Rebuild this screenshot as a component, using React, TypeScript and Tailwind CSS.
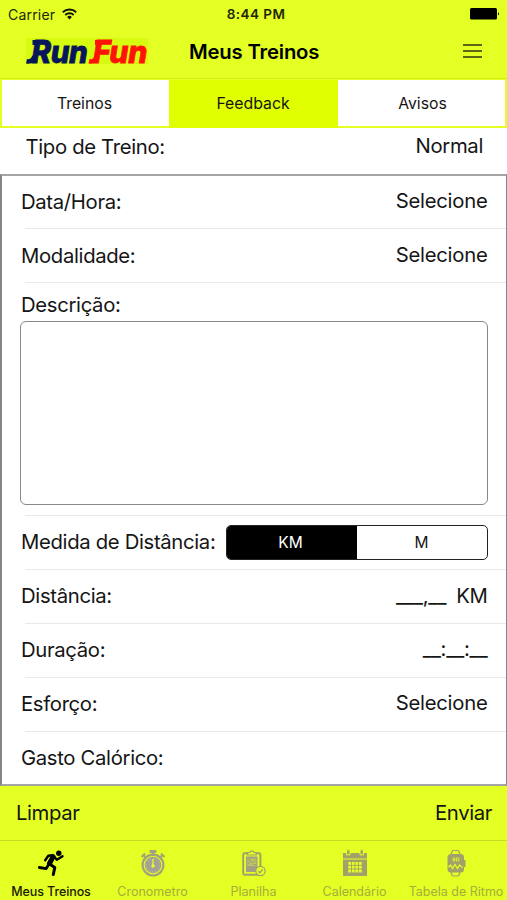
import type { ReactNode } from "react";

function Row({ label, value, className = "", valueClass = "" }: { label: string; value?: ReactNode; className?: string; valueClass?: string }) {
  return (
    <div className={"relative flex shrink-0 items-center justify-between pr-[18.500px] pl-[19px] " + className}>
      <span>{label}</span>
      <span className={valueClass}>{value}</span>
      <div className="absolute right-0 bottom-0 left-[23px] h-px bg-[#e9e9e9]" />
    </div>
  );
}

function Tab({ label, icon, active = false, className = "" }: { label: string; icon: ReactNode; active?: boolean; className?: string }) {
  return (
    <div className={"flex flex-col items-center pt-[8px] whitespace-nowrap " + (active ? "font-medium text-[#1c2003]" : "text-[#a5ad3c]")}>
      <div className="flex h-7 items-center justify-center">{icon}</div>
      <span className={"mt-[6px] text-[12.5px] leading-[18px] " + className}>{label}</span>
    </div>
  );
}

const RunIcon = () => (
  <svg width="28" height="28" viewBox="0 0 28 28" fill="none" stroke="#000" strokeLinecap="round" strokeLinejoin="round">
    <circle cx="21.8" cy="4.200" r="2.700" fill="#000" stroke="none" />
    <path d="M8.200 11.200 11.300 6.800 16 6.300 19.800 10.800 25.500 7.200" strokeWidth="2.400" />
    <path d="M16 7.800 12.500 14.500" strokeWidth="5" />
    <path d="M12 15 9.200 19.600 2.300 18.500" strokeWidth="2.800" />
    <path d="M12.500 15 17.800 18.500 16.300 25.500" strokeWidth="3" />
  </svg>
);

const StopwatchIcon = () => (
  <svg width="28" height="28" viewBox="0 0 28 28" fill="none" stroke="#a3a278">
    <path d="M11 1.500h6v2h-6z" fill="#a3a278" strokeWidth="1" />
    <path d="M14 3v4M6.200 8 4.500 6M21.800 8 23.500 6" strokeWidth="2.200" />
    <path d="M2.500 8 6 4.500M25.500 8 22 4.500" strokeWidth="2" />
    <circle cx="14" cy="16" r="10.400" strokeWidth="2.200" />
    <circle cx="14" cy="16" r="8.300" fill="#a3a198" stroke="none" />
    <circle cx="14" cy="16" r="6.700" stroke="#c9d455" strokeWidth="1" strokeDasharray="1.200 2.300" />
    <path d="M14 10v6" stroke="#e3ff23" strokeWidth="1.300" />
    <circle cx="14" cy="17" r="1.700" fill="#e3ff23" stroke="none" />
  </svg>
);

const ClipboardIcon = () => (
  <svg width="28" height="28" viewBox="0 0 28 28" fill="none" stroke="#a19f6c">
    <rect x="3.200" y="4.200" width="17.200" height="21.500" rx="1.500" strokeWidth="1.900" />
    <path d="M7.500 6V3.500h2.200a2.200 2.200 0 0 1 4.200 0h2.200V6z" fill="#e3ff23" strokeWidth="1.200" />
    <rect x="6" y="7.500" width="11.500" height="15.500" fill="#a19f84" stroke="none" />
    <rect x="7.300" y="9.500" width="9" height="7.500" fill="#bcc262" stroke="none" />
    <path d="M8 15l2.500-3 2 2 3-3M8 11h3M13 15.500h3" strokeWidth="1" />
    <circle cx="20.500" cy="22" r="4.700" fill="#e3ff23" strokeWidth="1.200" />
    <path d="m18.300 22.200 1.500 1.500 3-3.600" strokeWidth="1.300" />
  </svg>
);

const CalendarIcon = () => (
  <svg width="28" height="28" viewBox="0 0 28 28" fill="#a3a16a">
    <path d="M2 4h24v5.500H2zM2 10.500h24V27H2z" />
    <path d="M5.500 .8h3.500v5H5.500zM19 .8h3.500v5H19z" stroke="#e3ff23" strokeWidth="1" />
    <path d="M7.300 13h13.400v10.500H7.300z" fill="#e3ff23" />
    <path d="M7 16.400h14M7 20h14M10.500 13v11M14 13v11M17.500 13v11" stroke="#a3a16a" strokeWidth=".9" />
  </svg>
);

const WatchIcon = () => (
  <svg width="28" height="28" viewBox="0 0 28 28" fill="none" stroke="#a3a16a">
    <path d="M8.500 7 10 2.500Q10.300 1.500 11.300 1.500h4.400q1 0 1.300 1L18.500 7M8.500 22l1.500 4q.3 1 1.300 1h4.400q1 0 1.300-1l1.500-4" strokeWidth="1.200" />
    <rect x="5.500" y="5" width="16.500" height="18.500" rx="3.500" fill="#a3a16a" stroke="none" />
    <path d="M22.500 11v7" strokeWidth="2" />
    <path d="M10.500 9h2.300v3h-2.300M10.500 10.500h2.300M14.500 9h2.300v3h-2.300z" stroke="#e3ff23" strokeWidth=".8" />
    <path d="m6.500 18 2-2 2 3.500 2.500-4 2.500 4 2-3.500 2 2h1.500" stroke="#e3ff23" strokeWidth="1.200" />
  </svg>
);

export default function App() {
  return (
    <div className="flex h-[900px] w-[507px] flex-col overflow-hidden bg-white font-[Inter,'Liberation_Sans',sans-serif] text-[20.3px] tracking-[-0.33px] text-[#151515]">
      <header className="flex h-[79px] shrink-0 flex-col border-b border-[#d3ee15] bg-[#e3ff23]">
        <div className="grid h-7 grid-cols-3 items-center pr-[7px] pl-2 text-[14px] text-[#22260a]">
          <div className="flex items-center gap-[7px] tracking-[0.2px]">
            <span>Carrier</span>
            <svg width="15" height="12" viewBox="0 0 15 12" fill="none" stroke="#111" strokeWidth="1.900">
              <path d="M.8 4.200a9.600 9.600 0 0 1 13.400 0M3.300 7a6 6 0 0 1 8.400 0" />
              <path d="m7.500 11.500-2.400-2.600a3.400 3.400 0 0 1 4.800 0z" fill="#111" stroke="none" />
            </svg>
          </div>
          <span className="pl-[4px] text-center text-[13.5px] font-semibold tracking-[0.45px]">8:44 PM</span>
          <svg className="justify-self-end" width="30" height="12" viewBox="0 0 30 12">
            <rect width="27" height="11.500" rx="1.500" />
            <path d="M28 4q2 1.800 0 3.600z" />
          </svg>
        </div>
        <div className="grid h-[48px] grid-cols-[189px_1fr_44px] items-center">
          <svg width="132" height="44" viewBox="0 0 132 44" className="ml-[22px]">
            <rect x="4" y="8" width="122" height="26" fill="#d7fb10" />
            <g fontFamily="Inter, sans-serif" fontWeight="800" fontStyle="italic" fontSize="31" strokeWidth=".8">
              <text x="9.500" y="33" fill="#07165a" stroke="#07165a" textLength="56" lengthAdjust="spacingAndGlyphs">Run</text>
              <text x="71" y="33" fill="#ff1308" stroke="#ff1308" textLength="54" lengthAdjust="spacingAndGlyphs">Fun</text>
            </g>
            <path d="M4.500 31.300q6 1.200 8-5" stroke="#07165a" strokeWidth="4.500" fill="none" />
            <path d="M10.500 12.500h6" stroke="#07165a" strokeWidth="5" />
            <path d="M67 31.300q6 1.200 8-5" stroke="#ff1308" strokeWidth="4.500" fill="none" />
            <path d="M73 12.500h5" stroke="#ff1308" strokeWidth="5" />
          </svg>
          <h1 className="pt-px text-[20.3px] font-semibold tracking-[-0.18px] text-black">Meus Treinos</h1>
          <div className="-mt-[2px] flex flex-col gap-[4px]">
            <div className="h-[2px] w-[19px] bg-[#5a6412]" />
            <div className="h-[2px] w-[19px] bg-[#5a6412]" />
            <div className="h-[2px] w-[19px] bg-[#5a6412]" />
          </div>
        </div>
      </header>
      <nav className="grid h-[49px] shrink-0 grid-cols-[167px_169px_167px] border-2 border-t-[1px] border-[#e3ff23] text-center text-[15.800px] leading-[48px] tracking-[0px]">
        <span className="pr-[2px]">Treinos</span>
        <span className="bg-[#e0ff00] pr-px">Feedback</span>
        <span className="pl-[2px]">Avisos</span>
      </nav>
      <div className="flex h-[46px] shrink-0 items-start justify-between pt-[4px] pr-[24px] pl-[25.500px]">
        <span>Tipo de Treino:</span>
        <span className="-mt-px">Normal</span>
      </div>
      <main className="flex h-[612px] shrink-0 flex-col border-2 border-x-[#858585] border-y-[#a4a4a4] border-r-[1px]">
        <Row label="Data/Hora:" value="Selecione" className="h-[53px]" valueClass="pb-[2px] tracking-[-0.25px]" />
        <Row label="Modalidade:" value="Selecione" className="h-[54px]" valueClass="pb-[2px] tracking-[-0.25px]" />
        <div className="relative h-[233px] shrink-0 pt-[9px] pr-[18px] pl-[18px]">
          <div className="pl-px leading-[26px]">Descrição:</div>
          <div className="mt-[3px] h-[184px] rounded-[6px] border-[1.500px] border-[#888]" />
          <div className="absolute right-0 bottom-0 left-[23px] h-px bg-[#e9e9e9]" />
        </div>
        <Row
          label="Medida de Distância:"
          className="h-[54px] pb-[2px]"
          value={
            <div className="flex h-[35px] w-[262px] overflow-hidden rounded-[5px] border border-[#222] text-center text-[15.500px] leading-[33px] tracking-[0px]">
              <span className="w-[130px] bg-black pr-[2px] text-white">KM</span>
              <span className="flex-1">M</span>
            </div>
          }
        />
        <Row
          label="Distância:"
          className="h-[54px] pb-[2px]"
          value={<span className="flex items-baseline gap-[10px]"><span className="tracking-[-0.3px]">___,__</span><span>KM</span></span>}
        />
        <Row label="Duração:" value="__:__:__" className="h-[54px] pb-[2px]" valueClass="pb-[2px] tracking-[-0.3px]" />
        <Row label="Esforço:" value="Selecione" className="h-[54px] pb-[2px]" valueClass="pb-[2px] tracking-[-0.25px]" />
        <div className="flex flex-1 items-center pl-[19px]">Gasto Calórico:</div>
      </main>
      <div className="flex h-[54px] shrink-0 items-center justify-between bg-[#e3ff23] pr-[15px] pl-4 tracking-[-0.38px]">
        <span>Limpar</span>
        <span>Enviar</span>
      </div>
      <footer className="grid h-[60px] shrink-0 grid-cols-[102px_101px_101px_101px_102px] border-t border-[#c9dc23] bg-[#e3ff23]">
        <Tab label="Meus Treinos" icon={<RunIcon />} active className="tracking-[-0.1px]" />
        <Tab label="Cronometro" icon={<StopwatchIcon />} className="tracking-[0px]" />
        <Tab label="Planilha" icon={<ClipboardIcon />} className="tracking-[0px]" />
        <Tab label="Calendário" icon={<CalendarIcon />} className="tracking-[0px]" />
        <Tab label="Tabela de Ritmo" icon={<WatchIcon />} className="tracking-[0px]" />
      </footer>
    </div>
  );
}
